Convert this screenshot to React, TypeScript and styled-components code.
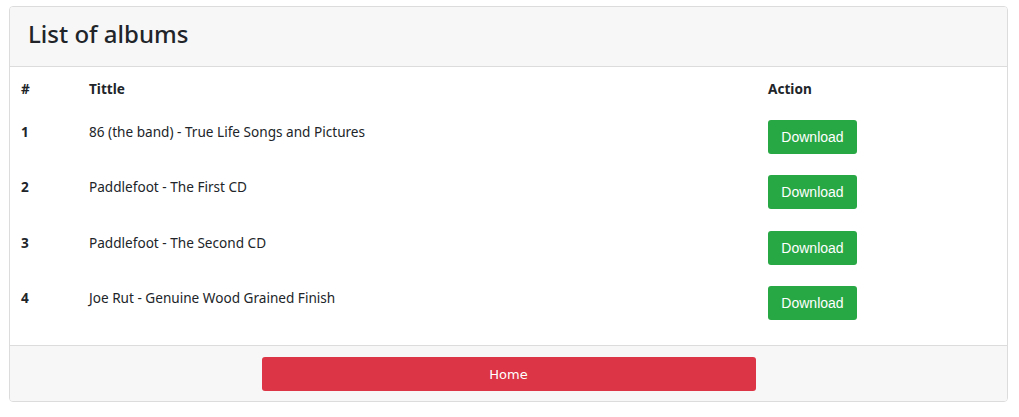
import React from "react";
import styled, { createGlobalStyle } from "styled-components";

const Global = createGlobalStyle`
  html, body { margin: 0; padding: 0; background: #fff; }
  body { font-family: "Noto Sans", "Open Sans", "Liberation Sans", sans-serif; color: #212529; }
  * { box-sizing: border-box; }
`;

const Page = styled.div`
  padding: 6px 11px 0 9px;
`;

const Card = styled.div`
  width: 999px;
  border: 1px solid #dcdcdc;
  border-radius: 4px;
  overflow: hidden;
  background: #fff;
`;

const CardHeader = styled.div`
  height: 60px;
  background: #f7f7f7;
  border-bottom: 1px solid #dcdcdc;
  display: flex;
  align-items: center;
  padding: 0 18px;
`;

const Title = styled.h1`
  margin: 0;
  font-size: 24px;
  font-weight: 500;
  line-height: 1.2;
  margin-top: -4px;
`;

const Table = styled.table`
  width: 100%;
  border-collapse: collapse;
  font-size: 13.6px;
  table-layout: fixed;
`;

const Th = styled.th<{ $w?: number }>`
  text-align: left;
  font-weight: 700;
  height: 45px;
  padding: 0 0 2px 11px;
  vertical-align: middle;
  width: ${(p) => (p.$w ? `${p.$w}px` : "auto")};
`;

const Td = styled.td<{ $bold?: boolean }>`
  font-weight: ${(p) => (p.$bold ? 700 : 400)};
  height: 55.33px;
  padding: 8px 0 0 11px;
  vertical-align: top;
  line-height: 21px;
`;

const TextCell = styled(Td)`
  padding-top: 9px;
`;

const Button = styled.button<{ $variant: "green" | "red" }>`
  border: none;
  border-radius: 3px;
  color: #fff;
  height: 34px;
  font-family: "Liberation Sans", Arial, sans-serif;
  background: ${(p) => (p.$variant === "green" ? "#28a745" : "#dc3545")};
  cursor: pointer;
`;

const DownloadButton = styled(Button)`
  width: 89px;
  font-size: 14px;
  padding: 0;
`;

const HomeButton = styled(Button)`
  width: 494px;
  font-family: "DejaVu Sans", "Noto Sans", sans-serif;
  font-size: 13px;
`;

const BodyPad = styled.div`
  padding-bottom: 12px;
`;

const Footer = styled.div`
  height: 56px;
  background: #f7f7f7;
  border-top: 1px solid #dcdcdc;
  display: flex;
  justify-content: center;
  padding-top: 11px;
`;

const albums = [
  "86 (the band) - True Life Songs and Pictures",
  "Paddlefoot - The First CD",
  "Paddlefoot - The Second CD",
  "Joe Rut - Genuine Wood Grained Finish",
];

export default function App() {
  return (
    <>
      <Global />
      <Page>
        <Card>
          <CardHeader>
            <Title>List of albums</Title>
          </CardHeader>
          <BodyPad>
            <Table>
              <thead>
                <tr>
                  <Th $w={68}>#</Th>
                  <Th $w={679}>Tittle</Th>
                  <Th>Action</Th>
                </tr>
              </thead>
              <tbody>
                {albums.map((a, i) => (
                  <tr key={a}>
                    <TextCell $bold>{i + 1}</TextCell>
                    <TextCell>{a}</TextCell>
                    <Td>
                      <DownloadButton $variant="green">Download</DownloadButton>
                    </Td>
                  </tr>
                ))}
              </tbody>
            </Table>
          </BodyPad>
          <Footer>
            <HomeButton $variant="red">Home</HomeButton>
          </Footer>
        </Card>
      </Page>
    </>
  );
}
